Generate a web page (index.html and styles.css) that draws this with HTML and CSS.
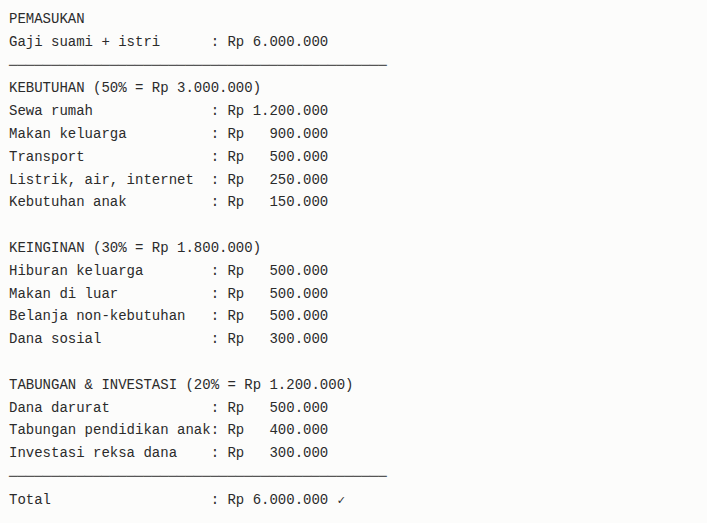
FILE: index.html
```html
<!DOCTYPE html>
<html lang="id">
<head>
<meta charset="utf-8">
<title>Anggaran</title>
<link rel="stylesheet" href="styles.css">
</head>
<body>
<pre class="budget">PEMASUKAN
Gaji suami + istri      : Rp 6.000.000
<span class="sep">─────────────────────────────────────────────</span>
KEBUTUHAN (50% = Rp 3.000.000)
Sewa rumah              : Rp 1.200.000
Makan keluarga          : Rp   900.000
Transport               : Rp   500.000
Listrik, air, internet  : Rp   250.000
Kebutuhan anak          : Rp   150.000

KEINGINAN (30% = Rp 1.800.000)
Hiburan keluarga        : Rp   500.000
Makan di luar           : Rp   500.000
Belanja non-kebutuhan   : Rp   500.000
Dana sosial             : Rp   300.000

TABUNGAN &amp; INVESTASI (20% = Rp 1.200.000)
Dana darurat            : Rp   500.000
Tabungan pendidikan anak: Rp   400.000
Investasi reksa dana    : Rp   300.000
<span class="sep">─────────────────────────────────────────────</span>
Total                   : Rp 6.000.000 <span class="check">✓</span></pre>
</body>
</html>
```
FILE: styles.css
```css
html, body {
  margin: 0;
  background: #fcfcfb;
}
body {
  padding: 8px 9px;
}
.budget {
  margin: 0;
  font-family: "Liberation Mono", "DejaVu Sans Mono", monospace;
  font-size: 14px;
  line-height: 22.8px;
  color: #2b2b2b;
}
.sep {
  color: #555;
  font-family: "DejaVu Sans Mono", monospace;
  font-size: 13.95px;
}
.check {
  font-family: "DejaVu Sans", sans-serif;
  font-size: 11px;
}
```
